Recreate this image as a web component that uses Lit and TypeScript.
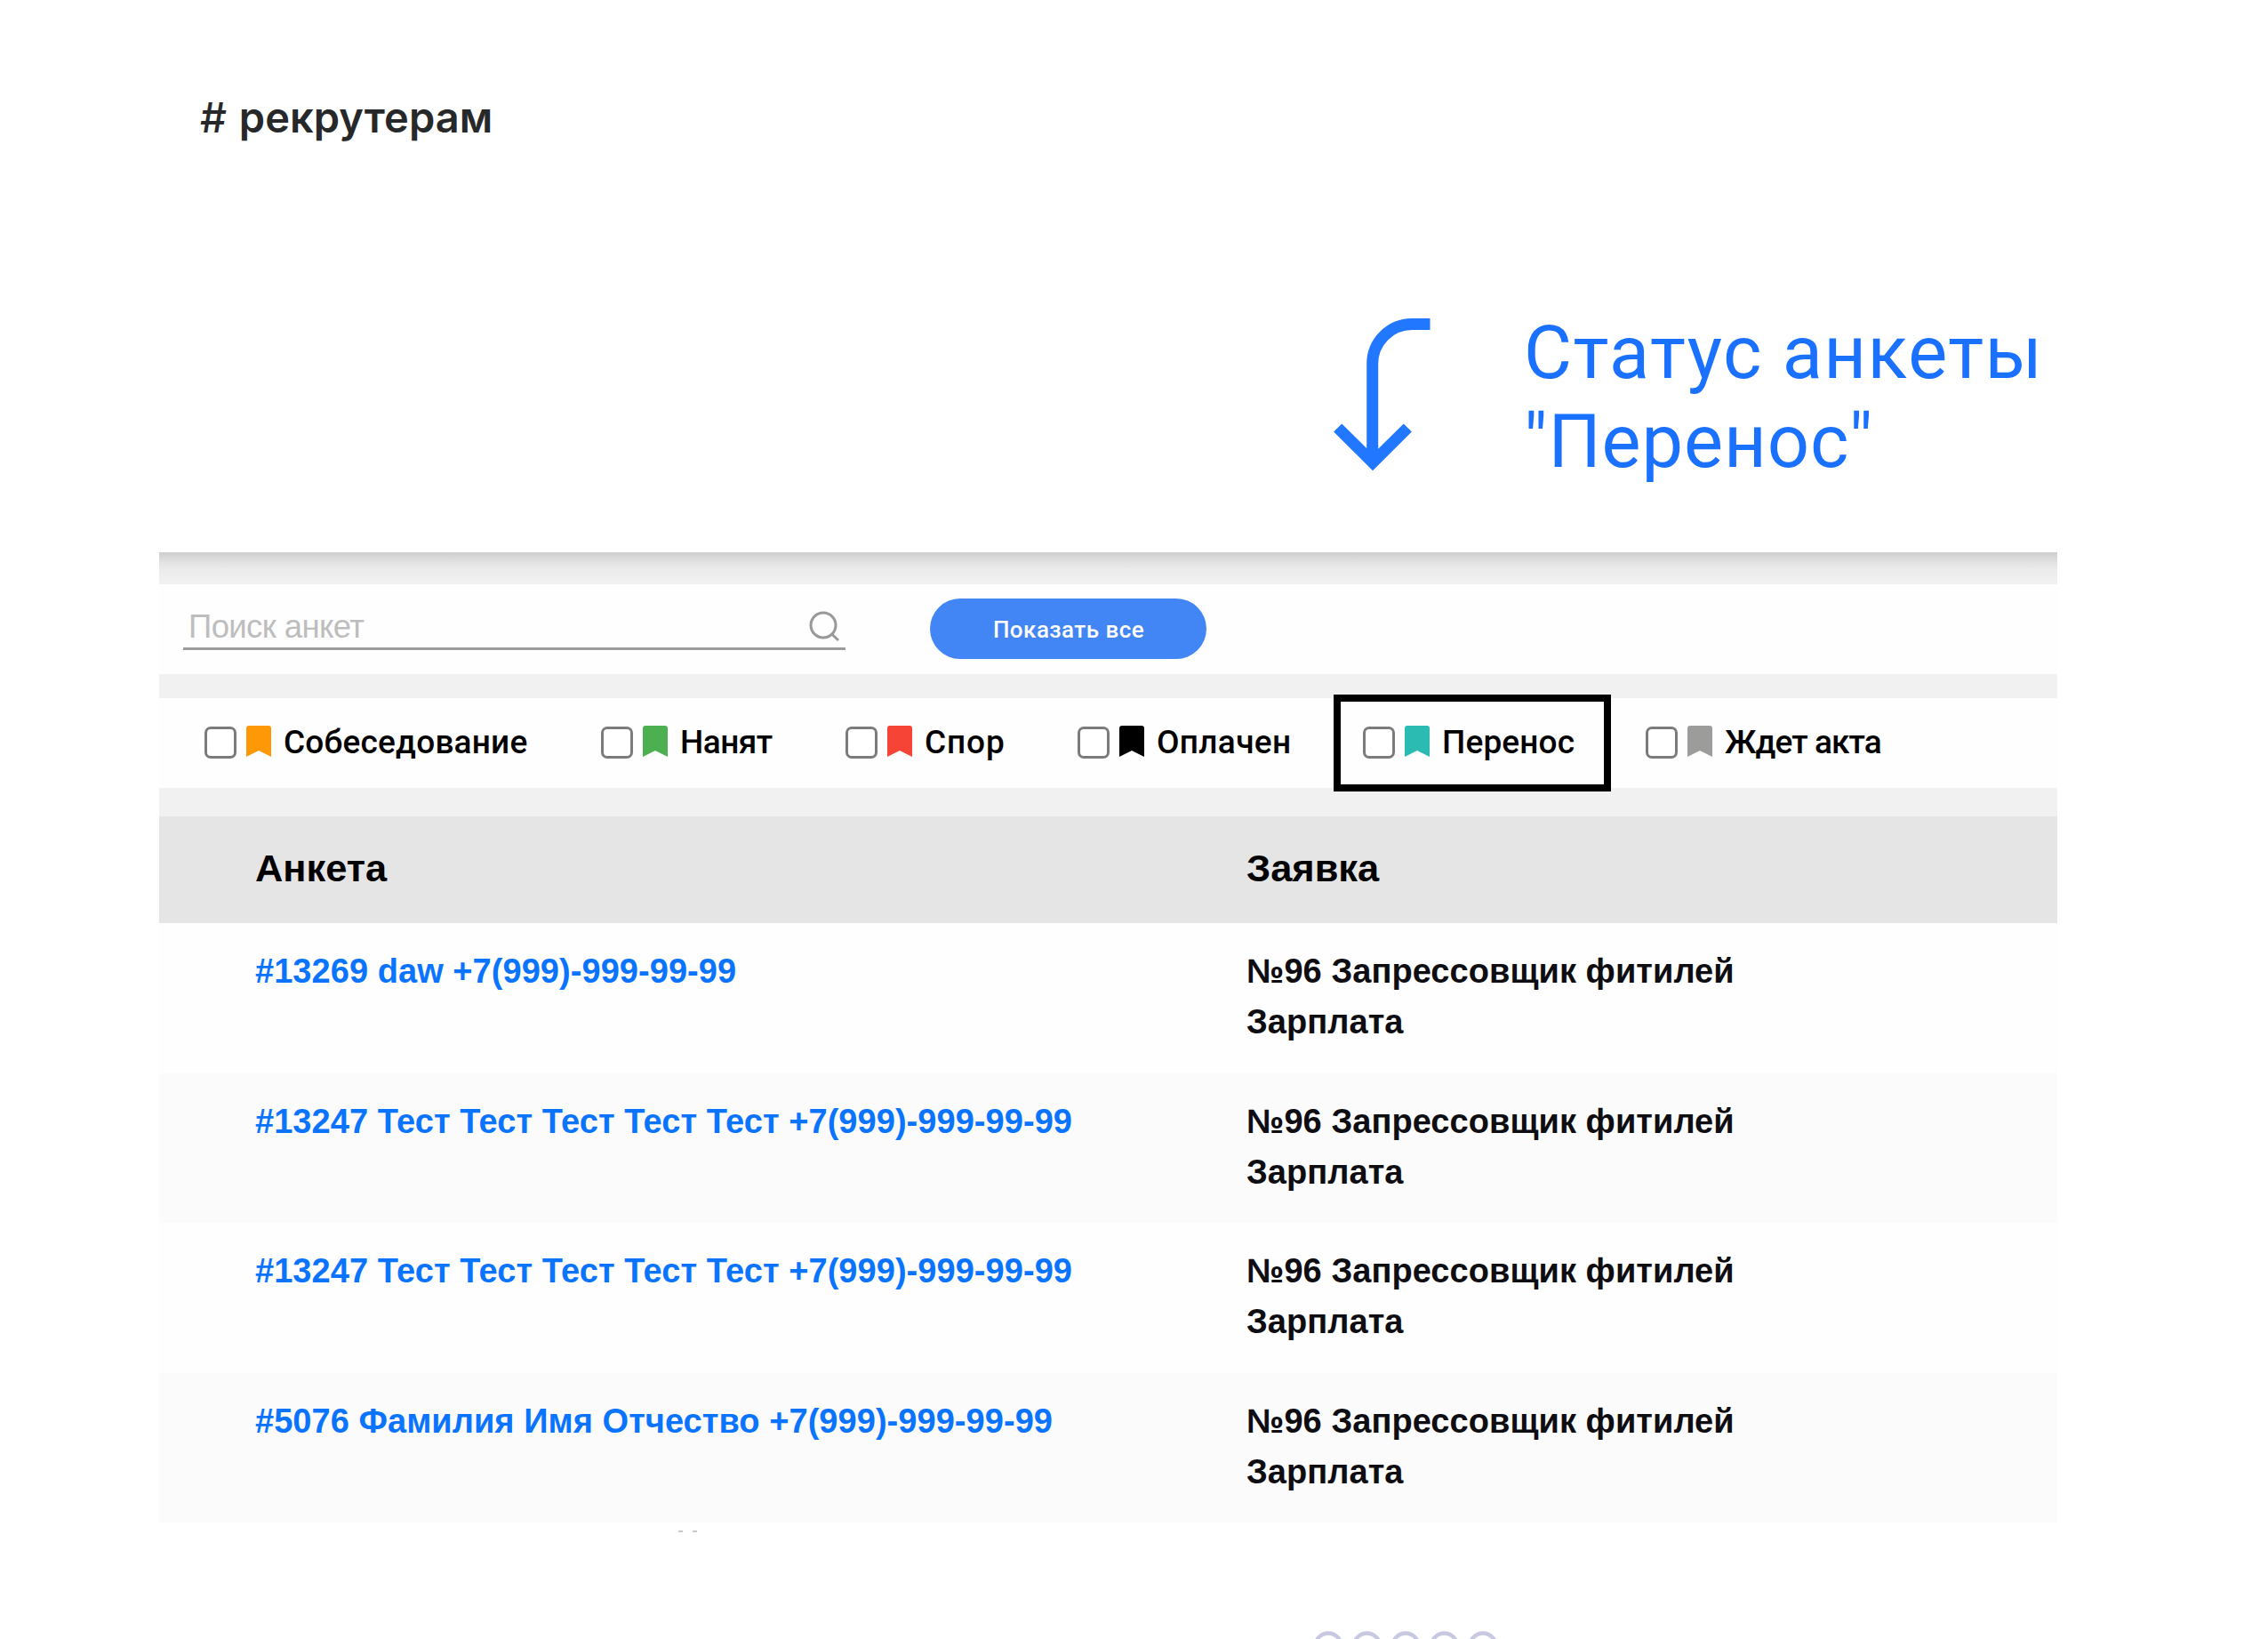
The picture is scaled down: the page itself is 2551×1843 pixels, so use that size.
import { LitElement, html, css, nothing } from 'lit';
import { customElement } from 'lit/decorators.js';
import { styleMap } from 'lit/directives/style-map.js';

interface Status { label: string; color: string; spacing: number; active?: boolean }
interface Row { form: string; order: string; kind: string }

const STATUSES: Status[] = [
  { label: 'Собеседование', color: '#ff9807', spacing: 0.2 },
  { label: 'Нанят', color: '#4caf50', spacing: -0.5 },
  { label: 'Спор', color: '#f64437', spacing: 0.9 },
  { label: 'Оплачен', color: '#000000', spacing: 0.35 },
  { label: 'Перенос', color: '#2bbbb3', spacing: 0.15, active: true },
  { label: 'Ждет акта', color: '#9c9c9a', spacing: -0.9 },
];

const ORDER = '№96 Запрессовщик фитилей';
const ROWS: Row[] = [
  { form: '#13269 daw +7(999)-999-99-99', order: ORDER, kind: 'Зарплата' },
  { form: '#13247 Тест Тест Тест Тест Тест +7(999)-999-99-99', order: ORDER, kind: 'Зарплата' },
  { form: '#13247 Тест Тест Тест Тест Тест +7(999)-999-99-99', order: ORDER, kind: 'Зарплата' },
  { form: '#5076 Фамилия Имя Отчество +7(999)-999-99-99', order: ORDER, kind: 'Зарплата' },
];

@customElement('app-root')
export class AppRoot extends LitElement {
  static styles = css`
    :host {
      display: flex;
      flex-direction: column;
      box-sizing: border-box;
      width: 2551px;
      height: 1843px;
      overflow: hidden;
      background: #fff;
      color: #000;
      font-family: 'Liberation Sans', Arial, sans-serif;
      white-space: nowrap;
    }
    .title {
      margin: 102px 0 0 225px;
      height: 59px;
      font: 500 47px/60px Inter, sans-serif;
      letter-spacing: 0.6px;
      color: #272829;
    }
    .tag { font-weight: 600; letter-spacing: 0.05px; }
    .callout {
      display: flex;
      margin: 186px 0 0 1500px;
      height: 274px;
    }
    .arrow { display: block; margin-top: 11px; width: 110px; height: 175px; }
    .callout-text {
      display: flex;
      flex-direction: column;
      margin-left: 104px;
      font: 400 83px/99.7px Roboto, sans-serif;
      letter-spacing: 1.4px;
      color: #1a70ff;
    }
    .quoted { letter-spacing: 0.9px; }
    .panel { margin-left: 179px; width: 2135px; background: #fefefe; }
    .shade {
      height: 36px;
      background: linear-gradient(#cdcfce 0, #d9dad9 7px, #e5e5e5 13px, #ededed 22px, #f1f1f1 36px);
    }
    .tools { display: flex; height: 101px; padding-left: 27px; }
    .field {
      display: flex;
      justify-content: space-between;
      box-sizing: border-box;
      width: 745px;
      height: 74px;
      padding: 27px 7px 0 6px;
      border-bottom: 3px solid #9b9b9b;
      font-size: 36.5px;
      line-height: 41px;
      letter-spacing: -0.6px;
      color: #bdbdbd;
    }
    .lens { display: block; width: 36px; height: 36px; margin-top: 3px; }
    .show-all {
      display: flex;
      align-items: center;
      justify-content: center;
      margin: 16px 0 0 95px;
      width: 311px;
      height: 68px;
      padding: 2px 0 0 1px;
      border: 0;
      border-radius: 34px;
      background: #4285f5;
      color: #fff;
      font: 500 26px/30px Roboto, sans-serif;
      letter-spacing: 0.45px;
    }
    .gap { height: 27px; background: #f1f1f1; }
    .gap.tall { height: 32px; }
    .filters {
      display: grid;
      grid-template-columns: 446px 275px 261px 321px 318px auto;
      align-items: center;
      box-sizing: border-box;
      height: 101px;
      padding: 0 0 2px 51px;
    }
    .status {
      position: relative;
      display: flex;
      align-items: center;
      font: 500 37px/44px Roboto, sans-serif;
    }
    .box {
      box-sizing: border-box;
      width: 36px;
      height: 36px;
      border: 3px solid #7b7b7b;
      border-radius: 7px;
      background: #fff;
    }
    .mark { display: block; width: 28px; height: 35px; margin: 0 14px 3px 11px; }
    .frame {
      position: absolute;
      left: -33px;
      top: -32px;
      box-sizing: border-box;
      width: 312px;
      height: 109px;
      border: 8px solid #000;
    }
    .head, .row {
      display: grid;
      grid-template-columns: 1115px 1fr;
      padding-left: 108px;
    }
    .head {
      align-items: center;
      box-sizing: border-box;
      height: 120px;
      padding-bottom: 4px;
      background: #e5e5e5;
      font-size: 43.4px;
      font-weight: 700;
    }
    .row {
      box-sizing: border-box;
      height: 168.5px;
      padding-top: 26px;
      font-size: 38px;
      line-height: 57px;
      font-weight: 700;
      letter-spacing: 0.05px;
      color: #0d0d12;
    }
    .row:nth-child(odd) { background: #fbfbfb; }
    .link { color: #0a74ff; }
    .rest { display: flex; flex-direction: column; flex: 1; justify-content: space-between; }
    .dashes { display: flex; gap: 11px; margin: 9px 0 0 763px; }
    .dash { width: 5px; height: 2px; background: #c9c9c9; }
    .rings { display: block; margin-left: 1470px; width: 230px; height: 9px; }
  `;

  private renderStatus(s: Status) {
    return html`<label class="status">
      <span class="box"></span>
      <svg class="mark" viewBox="0 0 28 35" style=${styleMap({ color: s.color })}>
        <path fill="currentColor" d="M0 35V3Q0 0 3 0H25Q28 0 28 3V35L14 28Z" />
      </svg>
      <span style=${styleMap({ letterSpacing: `${s.spacing}px` })}>${s.label}</span>
      ${s.active ? html`<span class="frame"></span>` : nothing}
    </label>`;
  }

  render() {
    return html`
      <div class="title"># <span class="tag">рекрутерам</span></div>
      <div class="callout">
        <svg class="arrow" viewBox="0 0 110 175" fill="none" stroke="#2177ff" stroke-width="13">
          <path d="M108.5 6.5H88A44.5 44.5 0 0 0 43.7 51V160" />
          <path d="M4.7 123L44 162L83.3 123" />
        </svg>
        <div class="callout-text"><span>Статус анкеты</span><span class="quoted">"Перенос"</span></div>
      </div>
      <div class="panel">
        <div class="shade"></div>
        <div class="tools">
          <div class="field">
            <span>Поиск анкет</span>
            <svg class="lens" viewBox="0 0 36 36" fill="none" stroke="#999" stroke-width="3">
              <circle cx="18" cy="16" r="14" />
              <path d="M27.5 26L35 33" />
            </svg>
          </div>
          <button class="show-all">Показать все</button>
        </div>
        <div class="gap"></div>
        <div class="filters">${STATUSES.map((s) => this.renderStatus(s))}</div>
        <div class="gap tall"></div>
        <div class="table">
          <div class="head"><span>Анкета</span><span>Заявка</span></div>
          ${ROWS.map((r) => html`<div class="row">
            <span class="link">${r.form}</span>
            <span>${r.order}<br />${r.kind}</span>
          </div>`)}
        </div>
      </div>
      <div class="rest">
        <div class="dashes"><span class="dash"></span><span class="dash"></span></div>
        <svg class="rings" viewBox="0 0 230 9" fill="none" stroke="#c8c8e2" stroke-width="4.5">
          ${[0, 1, 2, 3, 4].map((i) => html`<svg x=${i * 43.5} y="0" width="60" height="9"><circle cx="24" cy="17" r="14.5" /></svg>`)}
        </svg>
      </div>
    `;
  }
}
